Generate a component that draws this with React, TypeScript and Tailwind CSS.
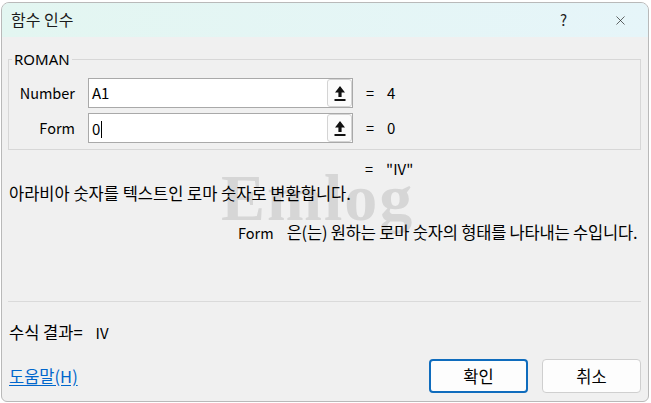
import { X } from 'lucide-react';

function ArrowButton() {
  return (
    <div className="flex h-[28px] w-[25px] items-center justify-center rounded-[3px] border border-[#d4d4d4] bg-[#fbfbfb]">
      <svg width="12" height="17" viewBox="0 0 12 17">
        <path d="M6 1 L11 7.5 L7.6 7.5 L7.6 12 L4.4 12 L4.4 7.5 L1 7.5 Z" fill="#111" />
        <rect x="0.5" y="14" width="11" height="2" fill="#111" />
      </svg>
    </div>
  );
}

function ArgRow({ label, value, result, caret }: { label: string; value: string; result: string; caret?: boolean }) {
  return (
    <div className="flex h-[30px] items-center">
      <span className="w-[66px] text-right">{label}</span>
      <div className="ml-[13px] flex h-[30px] w-[265px] items-center border border-[#a9a9a9] bg-white">
        <span className="flex-1 pl-[3px] text-[15px]">
          {value}
          {caret && <span className="ml-px inline-block h-[17px] w-px translate-y-[3px] bg-black" />}
        </span>
        <ArrowButton />
      </div>
      <span className="ml-[13px]">=</span>
      <span className="ml-[13px] text-[15px]">{result}</span>
    </div>
  );
}

export default function App() {
  return (
    <div className="h-[403px] w-[651px] overflow-hidden bg-white font-['Noto_Sans_CJK_KR',sans-serif] text-[14.5px] leading-[18px] text-black">
      <div className="relative ml-px mt-[2px] flex h-[400px] w-[648px] flex-col overflow-hidden rounded-t-lg rounded-b-md border border-[#b9b9b9] bg-[#f0f0f0]">
        {/* watermark */}
        <div className="pointer-events-none absolute left-[219px] top-[162px] font-['Liberation_Serif',serif] text-[66px] font-bold leading-none tracking-[2px] text-[#d6d6d6]">
          Emlog
        </div>

        {/* Title bar */}
        <div className="flex h-[34px] shrink-0 items-center bg-linear-to-r from-[#e3f6f1] to-[#e6f5f9]">
          <span className="mb-[3px] pl-[9px] text-[16px] text-[#1b1b1b]">함수 인수</span>
          <div className="ml-auto flex h-full">
            <div className="flex w-[57px] items-center justify-center text-[15px] text-[#222]">?</div>
            <div className="flex w-[56px] items-center justify-center">
              <X size={15} strokeWidth={1.1} color="#222" />
            </div>
          </div>
        </div>

        {/* Arguments */}
        <fieldset className="relative ml-[6px] mt-[13px] w-[633px] border border-[#d7d7d7] pb-[6px]">
          <legend className="ml-[3px] px-[2px] font-['Noto_Sans',sans-serif] text-[15px] leading-[18px]">ROMAN</legend>
          <div className="mt-[10px] flex flex-col gap-[5px]">
            <ArgRow label="Number" value="A1" result="4" />
            <ArgRow label="Form" value="0" result="0" caret />
          </div>
        </fieldset>

        <div className="relative mt-[10px] pl-[363px]">
          <span>=</span>
          <span className="ml-[13px] text-[15px]">"IV"</span>
        </div>

        <p className="relative mt-[6px] pl-[7px] text-[16.5px]">아라비아 숫자를 텍스트인 로마 숫자로 변환합니다.</p>

        <p className="relative mt-[21px] pl-[236px]">
          <span>Form</span>
          <span className="ml-[13px] text-[16.5px] tracking-[-0.2px]">은(는) 원하는 로마 숫자의 형태를 나타내는 수입니다.</span>
        </p>

        <div className="ml-[6px] mt-[59px] w-[633px] border-t border-[#dadada]" />

        <p className="mt-[21px] pl-[7px]">
          <span className="text-[16.5px]">수식 결과=</span>
          <span className="ml-[13px] text-[15px]">IV</span>
        </p>

        {/* Footer */}
        <div className="mt-[17px] flex items-center pl-[7px] pr-[7px]">
          <a href="#" className="text-[16.5px] text-[#0066cc] underline underline-offset-2">도움말(H)</a>
          <div className="ml-auto flex gap-[14px] text-[16.5px]">
            <button className="flex h-[34px] w-[99px] items-center justify-center rounded-[4px] border-2 border-[#0f6cbd] bg-[#fdfdfd]">
              확인
            </button>
            <button className="flex h-[34px] w-[99px] items-center justify-center rounded-[4px] border border-[#cfcfcf] bg-[#fdfdfd]">
              취소
            </button>
          </div>
        </div>
      </div>
    </div>
  );
}
